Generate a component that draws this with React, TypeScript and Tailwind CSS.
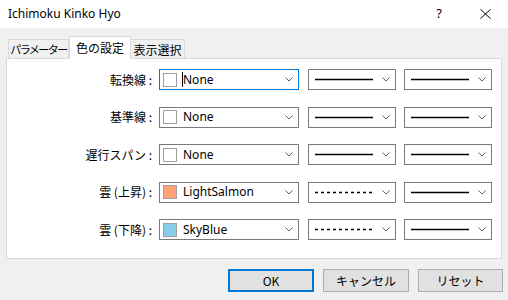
import type { FC } from 'react';

type Row = {
    label: string;
    swatch: string;
    name: string;
    dashed: boolean;
    focused: boolean;
};

const rows: Row[] = [
    { label: '転換線 :', swatch: 'bg-white', name: 'None', dashed: false, focused: true },
    { label: '基準線 :', swatch: 'bg-white', name: 'None', dashed: false, focused: false },
    { label: '遅行スパン :', swatch: 'bg-white', name: 'None', dashed: false, focused: false },
    { label: '雲 (上昇) :', swatch: 'bg-[#ffa07a]', name: 'LightSalmon', dashed: true, focused: false },
    { label: '雲 (下降) :', swatch: 'bg-[#87ceeb]', name: 'SkyBlue', dashed: true, focused: false },
];

const Chevron: FC = () => (
    <svg width="8" height="5" viewBox="0 0 8 5" className="shrink-0">
        <path d="M0.5 0.5 L4 4 L7.5 0.5" fill="none" stroke="#606060" strokeWidth="1" />
    </svg>
);

const LineCombo: FC<{ dashed: boolean }> = ({ dashed }) => (
    <div className="flex h-[21px] w-[88px] items-center justify-between border border-[#7a7a7a] bg-white pl-[6px] pr-[5px]">
        <svg width="58" height="3" viewBox="0 0 58 3">
            <line x1="0" y1="1.5" x2="58" y2="1.5" stroke="#000" strokeWidth="1.3" strokeDasharray={dashed ? '3 3' : undefined} />
        </svg>
        <Chevron />
    </div>
);

const App: FC = () => {
    return (
        <div className="flex h-[300px] w-[508px] flex-col bg-[#f0f0f0] font-['Noto_Sans','Noto_Sans_CJK_JP',sans-serif] text-[12px] text-black">
            <header className="flex h-[28px] items-center bg-white pl-[8px]">
                <span className="flex-1 text-[12px]">Ichimoku Kinko Hyo</span>
                <span className="w-[46px] text-center text-[13px]">?</span>
                <span className="flex w-[46px] items-center justify-center">
                    <svg width="11" height="10" viewBox="0 0 11 10"><path d="M0.5 0.5 L10.5 9.5 M10.5 0.5 L0.5 9.5" stroke="#000" strokeWidth="1" /></svg>
                </span>
            </header>

            <div className="px-[6px] pt-[8px]">
                <div className="relative z-10 -mb-px flex items-end whitespace-nowrap pl-[2px] font-['Noto_Sans_CJK_JP',sans-serif]">
                    <div className="flex h-[20px] w-[61px] items-center justify-center border border-b-0 border-[#d9d9d9] text-[11px] tracking-[-1.5px]">パラメーター</div>
                    <div className="flex h-[23px] w-[62px] items-center justify-center border border-b-0 border-[#d9d9d9] bg-white pb-[1px]">色の設定</div>
                    <div className="flex h-[20px] w-[54px] items-center justify-center border border-b-0 border-l-0 border-[#d9d9d9]">表示選択</div>
                </div>
                <div className="flex h-[201px] flex-col gap-[16.5px] border border-[#d9d9d9] bg-white pt-[10px]">
                    {rows.map((r) => (
                        <div key={r.label} className="flex items-center">
                            <div className="w-[146px] whitespace-nowrap pr-[1px] text-right font-['Noto_Sans_CJK_JP',sans-serif]">{r.label}</div>
                            <div className={`ml-[6px] flex h-[21px] w-[140px] items-center border bg-white pl-[3px] pr-[5px] ${r.focused ? 'border-[#0078d7]' : 'border-[#7a7a7a]'}`}>
                                <span className={`h-[14px] w-[14px] shrink-0 border border-[#a0a0a0] ${r.swatch}`} />
                                <span className="relative ml-[6px] flex-1 leading-none">
                                    {r.focused && <span className="absolute -left-px top-[-2px] h-[15px] w-px bg-black" />}
                                    {r.name}
                                </span>
                                <Chevron />
                            </div>
                            <div className="ml-[9px]">
                                <LineCombo dashed={r.dashed} />
                            </div>
                            <div className="ml-[8px]">
                                <LineCombo dashed={false} />
                            </div>
                        </div>
                    ))}
                </div>
            </div>

            <div className="flex justify-end gap-[9px] pr-[5px] pt-[10px] font-['Noto_Sans_CJK_JP',sans-serif]">
                <button className="h-[23px] w-[86px] border-2 border-[#0078d7] bg-[#e1e1e1]">OK</button>
                <button className="h-[23px] w-[86px] border border-[#adadad] bg-[#e1e1e1]">キャンセル</button>
                <button className="h-[23px] w-[85px] border border-[#adadad] bg-[#e1e1e1]">リセット</button>
            </div>
        </div>
    );
};

export default App;
